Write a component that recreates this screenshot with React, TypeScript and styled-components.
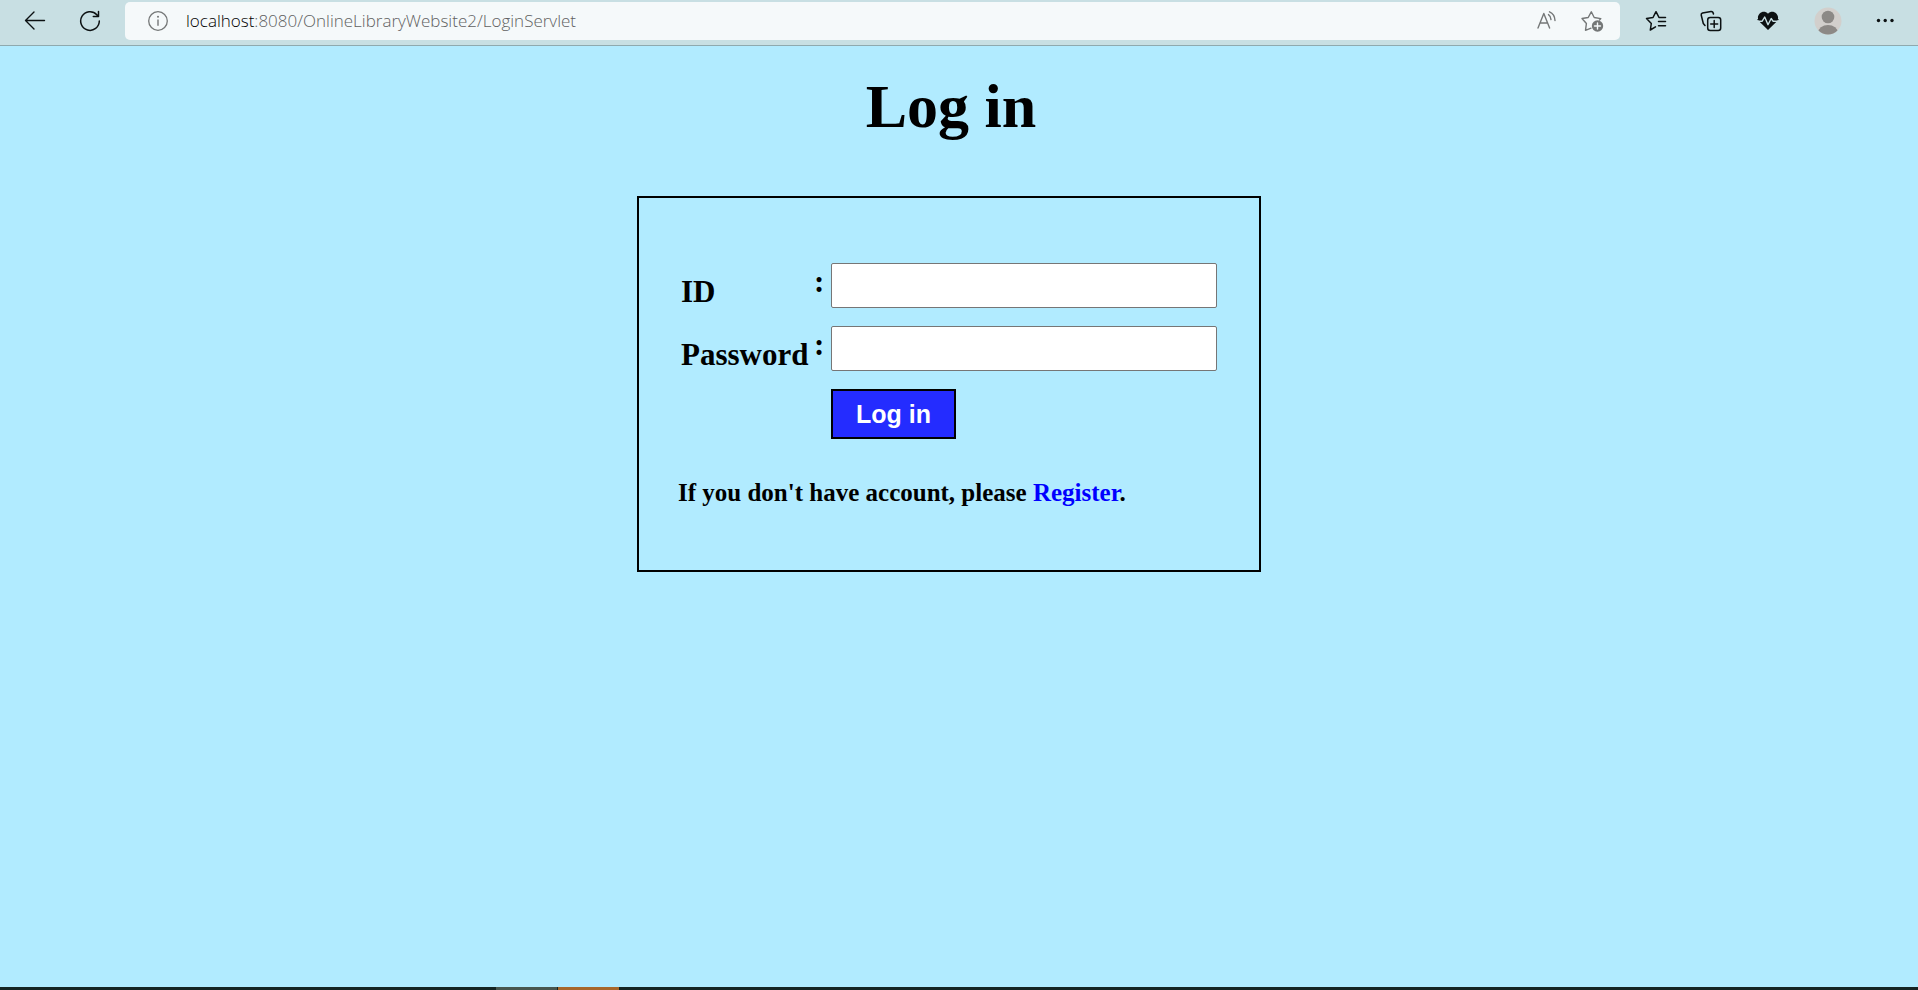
import React from "react";
import styled, { createGlobalStyle } from "styled-components";

const GlobalStyle = createGlobalStyle`
  *, *::before, *::after { box-sizing: border-box; }
  body {
    margin: 0;
    background: #b1ebff;
    color: #000;
    font-family: "Liberation Serif", "Times New Roman", serif;
  }
`;

const Window = styled.div`
  display: flex;
  flex-direction: column;
  min-height: 100vh;
`;

const Toolbar = styled.header`
  display: flex;
  align-items: center;
  height: 46px;
  padding: 0 5px 4px 7px;
  background: #c8dfe3;
  border-bottom: 1px solid #8fa9ae;
`;

const ToolButton = styled.button<{ $width?: number }>`
  display: flex;
  align-items: center;
  justify-content: center;
  flex: none;
  width: ${({ $width }) => $width ?? 55}px;
  height: 36px;
  padding: 0;
  border: 0;
  background: none;
  color: #0c1112;
`;

const AddressBar = styled.div`
  display: flex;
  align-items: center;
  flex: 1;
  height: 38px;
  margin: 0 8px;
  padding: 0 6px 0 10px;
  border-radius: 5px;
  background: #f5f9fa;
`;

const AddressButton = styled(ToolButton)`
  width: 45px;
  color: #747777;
`;

const Url = styled.div`
  flex: 1;
  padding-left: 6px;
  font-family: "Open Sans", "Segoe UI", sans-serif;
  font-size: 17px;
  font-weight: 300;
  line-height: 24px;
  color: #5f6161;
`;

const Host = styled.span`
  color: #000;
`;

const Page = styled.main`
  display: flex;
  flex-direction: column;
  align-items: center;
  flex: 1;
  padding: 24px 20px 24px 0;
`;

const Title = styled.h1`
  margin: 0 0 54px;
  padding-left: 4px;
  font-size: 62px;
  line-height: 72px;
`;

const LoginForm = styled.form`
  width: 624px;
  max-width: 100%;
  padding: 65px 39px 62px;
  border: 2px solid #000;
`;

const Fields = styled.div`
  display: grid;
  grid-template-columns: 133px 17px 1fr;
  row-gap: 18px;
  padding: 0 3px;
`;

const Label = styled.label`
  align-self: end;
  font-size: 31px;
  font-weight: bold;
  line-height: 32px;
`;

const Colon = styled.span`
  font-size: 31px;
  font-weight: bold;
  line-height: 38px;
`;

const TextField = styled.input`
  width: 100%;
  height: 45px;
  padding: 1px 6px;
  border: 1px solid #767676;
  border-radius: 2px;
  background: #fff;
  font: 25px "Liberation Sans", Arial, sans-serif;
`;

const Submit = styled.button`
  grid-column: 3;
  justify-self: start;
  width: 125px;
  height: 50px;
  padding: 0;
  border: 2px solid #000;
  background: #242cff;
  color: #fff;
  font: bold 25px "Liberation Sans", Arial, sans-serif;
`;

const Note = styled.p`
  margin: 39px 0 0;
  font-size: 25px;
  font-weight: bold;
  line-height: 30px;
`;

const RegisterLink = styled.a`
  color: #00f;
  text-decoration: none;
`;

const Taskbar = styled.footer`
  display: flex;
  gap: 1px;
  height: 3px;
  padding-left: 496px;
  background: #142423;
`;

const TaskItem = styled.span<{ $color: string }>`
  width: 61px;
  background: ${({ $color }) => $color};
`;

function Icon({ size = 22, children }: { size?: number; children: React.ReactNode }) {
  return (
    <svg
      width={size}
      height={size}
      viewBox={`0 0 ${size} ${size}`}
      fill="none"
      stroke="currentColor"
      strokeWidth="1.5"
      strokeLinecap="round"
      strokeLinejoin="round"
      aria-hidden="true"
    >
      {children}
    </svg>
  );
}

export default function App() {
  return (
    <>
      <GlobalStyle />
      <Window>
        <Toolbar>
          <ToolButton aria-label="Back">
            <Icon>
              <path d="M20.5 10.5H1.5M10 2L1.5 10.5L10 19" strokeWidth="1.4" />
            </Icon>
          </ToolButton>
          <ToolButton aria-label="Refresh">
            <Icon>
              <path d="M20.3 11A9.3 9.3 0 1 1 17.8 4.7L19.3 6.4M19.5 1.5V6.6H14.3" />
            </Icon>
          </ToolButton>
          <AddressBar>
            <AddressButton aria-label="Site information">
              <Icon>
                <circle cx="11" cy="11" r="9.3" strokeWidth="1.3" />
                <path d="M11 10V15.3" strokeWidth="1.4" />
                <circle cx="11" cy="6.8" r="1" fill="currentColor" stroke="none" />
              </Icon>
            </AddressButton>
            <Url>
              <Host>localhost</Host>:8080/OnlineLibraryWebsite2/LoginServlet
            </Url>
            <AddressButton aria-label="Read aloud">
              <Icon>
                <path
                  d="M2 18L7.8 3.5L13.6 18M4 13H11.6M12.5 4.6Q14.8 6.2 15 9.6M13.5 1.8Q18.7 4 19 10.5"
                  strokeWidth="1.4"
                />
              </Icon>
            </AddressButton>
            <AddressButton aria-label="Add to favorites">
              <Icon size={24}>
                <path
                  d="M11 19.2L5.5 21.3L6.4 14.5L2 9.5L8.2 8.5L11.3 2.8L14.2 8.5L20.8 9.6L19.5 11"
                  strokeWidth="1.4"
                />
                <circle cx="17.5" cy="17" r="5.7" fill="currentColor" stroke="none" />
                <path d="M17.5 14V20M14.5 17H20.5" stroke="#f5f9fa" strokeWidth="1.4" />
              </Icon>
            </AddressButton>
          </AddressBar>
          <ToolButton aria-label="Favorites">
            <Icon>
              <path d="M10.5 16.8L5.3 20L6.3 13.5L1.5 8.5L8 7.5L11 1.7L14 7.5H20.5M13.5 11.5H20.5M13.5 15.7H20.5" />
            </Icon>
          </ToolButton>
          <ToolButton aria-label="Collections">
            <Icon>
              <rect x="7.7" y="7.5" width="13" height="13" rx="2.5" />
              <path d="M14.2 10.5V17.5M10.7 14H17.7M5 15.5L3.3 13.5L1.2 5Q1 3.5 2.5 3L11 1.4Q13 1.2 13.5 4" />
            </Icon>
          </ToolButton>
          <ToolButton $width={60} aria-label="Browser essentials">
            <Icon>
              <path
                d="M11 20L2 11.3C-2 5 6-1.5 11 3.7C16-1.5 24 5 20 11.3Z"
                fill="currentColor"
                stroke="none"
              />
              <path
                d="M0 11.2H5.2L7.7 7L11 14.7L14.2 8.5L16 11.2H22"
                stroke="#c8dfe3"
                strokeWidth="1.4"
              />
              <path d="M.8 9.6H4.2M17.5 9.6H21.2" strokeWidth="1" />
            </Icon>
          </ToolButton>
          <ToolButton $width={60} aria-label="Profile">
            <svg width="28" height="28" viewBox="0 0 28 28" aria-hidden="true">
              <defs>
                <clipPath id="avatar">
                  <circle cx="14" cy="14" r="13.5" />
                </clipPath>
              </defs>
              <g clipPath="url(#avatar)">
                <rect width="28" height="28" fill="#d2cfcc" />
                <circle cx="14" cy="10" r="6.3" fill="#8c8986" />
                <ellipse cx="14" cy="26" rx="10" ry="8" fill="#8c8986" />
              </g>
            </svg>
          </ToolButton>
          <ToolButton aria-label="Settings and more">
            <Icon>
              <g fill="currentColor" stroke="none">
                <circle cx="3.5" cy="10.5" r="1.7" />
                <circle cx="10.2" cy="10.5" r="1.7" />
                <circle cx="17" cy="10.5" r="1.7" />
              </g>
            </Icon>
          </ToolButton>
        </Toolbar>
        <Page>
          <Title>Log in</Title>
          <LoginForm onSubmit={(event) => event.preventDefault()}>
            <Fields>
              <Label htmlFor="user-id">ID</Label>
              <Colon>:</Colon>
              <TextField id="user-id" type="text" />
              <Label htmlFor="password">Password</Label>
              <Colon>:</Colon>
              <TextField id="password" type="password" />
              <Submit type="submit">Log in</Submit>
            </Fields>
            <Note>
              If you don't have account, please <RegisterLink href="#register">Register</RegisterLink>.
            </Note>
          </LoginForm>
        </Page>
        <Taskbar>
          <TaskItem $color="#47564f" />
          <TaskItem $color="#a7672b" />
        </Taskbar>
      </Window>
    </>
  );
}
